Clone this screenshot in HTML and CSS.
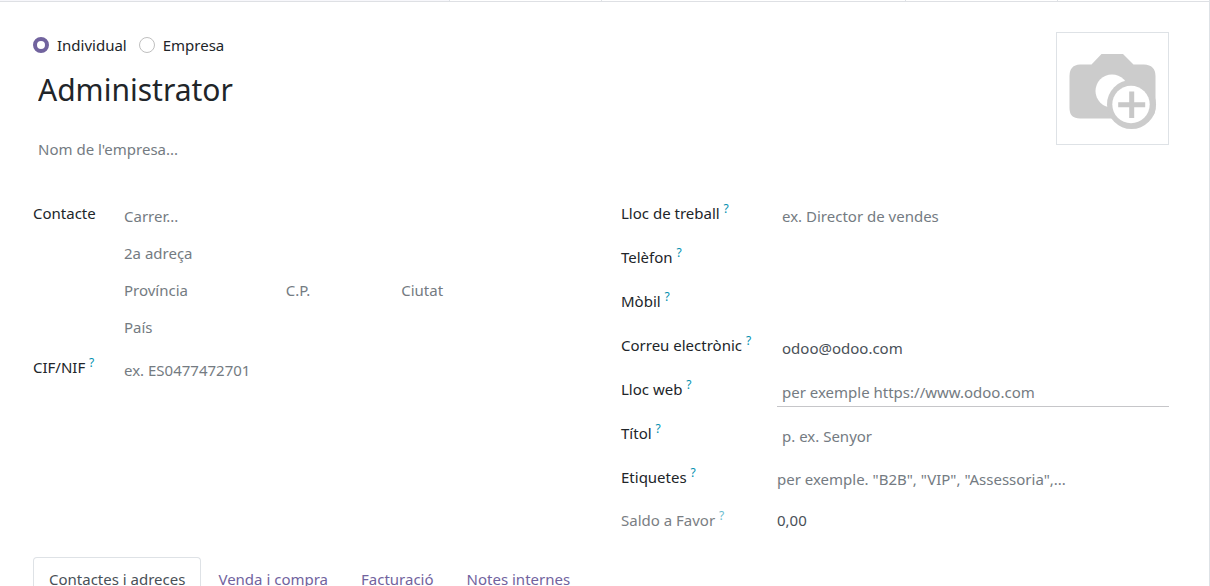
FILE: index.html
```html
<!DOCTYPE html>
<html lang="ca">
<head>
<meta charset="utf-8">
<meta name="viewport" content="width=device-width, initial-scale=1">
<title>Administrator</title>
<link rel="stylesheet" href="styles.css">
</head>
<body>
<main class="sheet">
  <div class="stat-bar">
    <span class="stat-space"></span>
    <span class="stat"></span>
    <span class="stat stat-wide"></span>
    <span class="stat"></span>
    <span class="stat"></span>
  </div>
  <form class="form">
    <header class="head">
      <div class="identity">
        <div class="kinds">
          <label class="kind"><input class="radio" type="radio" name="kind" checked>Individual</label>
          <label class="kind"><input class="radio" type="radio" name="kind">Empresa</label>
        </div>
        <h1 class="title"><input class="field name" type="text" value="Administrator" aria-label="Nom"></h1>
        <input class="field" type="text" placeholder="Nom de l'empresa..." aria-label="Nom de l'empresa">
      </div>
      <button class="avatar" type="button" aria-label="Afegeix una imatge">
        <svg class="camera" viewBox="0 0 111 111" aria-hidden="true">
          <path fill="#ccc" d="M34.500 31.500 44.500 21H66L76.500 31.500H87Q98.500 32 98.500 43V75Q98.500 85.500 87.500 85.500H23Q12.500 85.500 12.500 75V43Q12.500 32 23 31.500Z"/>
          <circle cx="55" cy="58" r="16.500" fill="#fff"/>
          <circle cx="74.500" cy="71.500" r="24.500" fill="#ccc"/>
          <circle cx="74" cy="71.500" r="18.700" fill="#fff"/>
          <path fill="#c8c8c8" d="M72.200 58.500h5v10.800h11v5h-11v10.800h-5V74.300h-11v-5h11z"/>
        </svg>
      </button>
    </header>
    <div class="columns">
      <div class="group group-left">
        <label class="label" for="street">Contacte</label>
        <div class="address">
          <input class="field wide" id="street" type="text" placeholder="Carrer...">
          <input class="field wide" type="text" placeholder="2a adreça" aria-label="2a adreça">
          <input class="field" type="text" placeholder="Província" aria-label="Província">
          <input class="field" type="text" placeholder="C.P." aria-label="C.P.">
          <input class="field" type="text" placeholder="Ciutat" aria-label="Ciutat">
          <input class="field wide" type="text" placeholder="País" aria-label="País">
        </div>
        <label class="label" for="vat">CIF/NIF <sup class="help">?</sup></label>
        <input class="field" id="vat" type="text" placeholder="ex. ES0477472701">
      </div>
      <div class="group group-right">
        <label class="label" for="job">Lloc de treball <sup class="help">?</sup></label>
        <input class="field" id="job" type="text" placeholder="ex. Director de vendes">
        <label class="label" for="phone">Telèfon <sup class="help">?</sup></label>
        <input class="field" id="phone" type="tel">
        <label class="label" for="mobile">Mòbil <sup class="help">?</sup></label>
        <input class="field" id="mobile" type="tel">
        <label class="label" for="email">Correu electrònic <sup class="help">?</sup></label>
        <input class="field" id="email" type="email" value="odoo@odoo.com">
        <label class="label" for="web">Lloc web <sup class="help">?</sup></label>
        <input class="field underlined" id="web" type="url" placeholder="per exemple https://www.odoo.com">
        <label class="label" for="position">Títol <sup class="help">?</sup></label>
        <input class="field" id="position" type="text" placeholder="p. ex. Senyor">
        <label class="label" for="tags">Etiquetes <sup class="help">?</sup></label>
        <input class="field flush" id="tags" type="text" placeholder="per exemple. &quot;B2B&quot;, &quot;VIP&quot;, &quot;Assessoria&quot;,...">
        <label class="label muted" for="credit">Saldo a Favor <sup class="help">?</sup></label>
        <output class="value" id="credit">0,00</output>
      </div>
    </div>
    <nav class="tabs">
      <a class="tab active" href="#contacts">Contactes i adreces</a>
      <a class="tab" href="#sales">Venda i compra</a>
      <a class="tab" href="#invoicing">Facturació</a>
      <a class="tab" href="#notes">Notes internes</a>
    </nav>
  </form>
</main>
</body>
</html>
```
FILE: styles.css
```css
* {
  box-sizing: border-box;
}

body {
  margin: 0;
  background: #fff;
  color: #212529;
  font: 15px/24px "Noto Sans", "Open Sans", sans-serif;
}

.sheet {
  height: 100vh;
  overflow: hidden;
  border-right: 1px solid #dee2e6;
}

.stat-bar {
  display: flex;
  height: 2px;
  border-bottom: 1px solid #dee0e4;
}

.stat-space {
  flex: 1;
  background: #f7f7fb;
}

.stat {
  width: 152px;
  border-left: 1px solid #dee2e6;
}

.stat-wide {
  width: 304px;
}

.form {
  padding: 30px 40px 0 33px;
}

.head {
  display: flex;
  justify-content: space-between;
  gap: 40px;
}

.identity {
  flex: 1;
}

.kinds {
  display: flex;
  gap: 12px;
  padding-top: 1px;
}

.kind {
  display: flex;
  align-items: center;
  gap: 8px;
}

.radio {
  appearance: none;
  width: 16px;
  height: 16px;
  margin: 0;
  border: 1px solid #bfbfbf;
  border-radius: 50%;
  background: #fff;
}

.radio:checked {
  border: 4px solid #71639e;
}

.title {
  margin: 8px 0 19px;
  font-weight: 400;
}

.field {
  display: block;
  width: 100%;
  min-width: 0;
  height: 30px;
  padding: 0 5px;
  border: 0;
  border-bottom: 1px solid transparent;
  outline: 0;
  background: transparent;
  color: #495057;
  font: inherit;
}

.field::placeholder {
  color: #747b82;
  opacity: 1;
}

.name {
  height: 50px;
  color: #212529;
  font-size: 30px;
  line-height: 48px;
}

.underlined {
  border-bottom-color: #c6c6c9;
}

.flush {
  height: 29px;
  padding: 0;
}

.avatar {
  align-self: flex-start;
  width: 113px;
  height: 113px;
  padding: 0;
  border: 1px solid #dee2e6;
  background: #fff;
}

.camera {
  display: block;
  width: 100%;
}

.columns {
  display: grid;
  grid-template-columns: 1fr 1fr;
  gap: 40px;
  margin-top: 37px;
}

.group {
  display: grid;
  align-content: start;
  align-items: start;
  row-gap: 14px;
}

.group-left {
  grid-template-columns: 86px 1fr;
  row-gap: 13px;
}

.group-right {
  grid-template-columns: 156px 1fr;
}

.address {
  display: grid;
  grid-template-columns: 35fr 25fr 40fr;
  row-gap: 7px;
}

.wide {
  grid-column: 1 / -1;
}

.help {
  color: #0190b0;
  font-size: 12px;
  line-height: 0;
}

.muted {
  color: #7a7e83;
}

.muted .help {
  opacity: 0.6;
}

.value {
  color: #495057;
}

.tabs {
  display: flex;
  gap: 1px;
  margin-top: 25px;
  border-bottom: 1px solid #dee2e6;
}

.tab {
  padding: 9px 15px;
  border: 1px solid transparent;
  border-bottom: 0;
  border-radius: 4px 4px 0 0;
  color: #71639e;
  text-decoration: none;
  white-space: nowrap;
}

.active {
  border-color: #dee2e6;
  color: #495057;
}
```
